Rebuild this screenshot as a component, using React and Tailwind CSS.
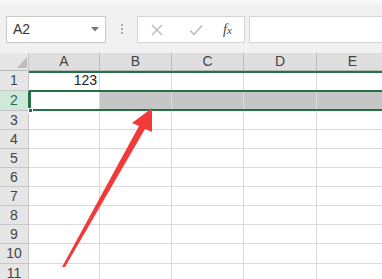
import React from "react";

const cols = [
  { l: "A", w: 71 },
  { l: "B", w: 72 },
  { l: "C", w: 72 },
  { l: "D", w: 73 },
  { l: "E", w: 72 },
];
const rows = [
  { n: 1, h: 20 },
  { n: 2, h: 20 },
  { n: 3, h: 19 },
  { n: 4, h: 19 },
  { n: 5, h: 19 },
  { n: 6, h: 19 },
  { n: 7, h: 19 },
  { n: 8, h: 19 },
  { n: 9, h: 19 },
  { n: 10, h: 20 },
  { n: 11, h: 19 },
];

export default function App() {
  return (
    <div
      className="relative w-[382px] h-[279px] overflow-hidden bg-white text-[#333]"
      style={{ fontFamily: '"Liberation Sans", Arial, sans-serif' }}
    >
      {/* toolbar */}
      <div className="h-[53px] bg-[#f1f1f1] border-t-[4px] border-[#f8f8f8] flex items-start pt-[12px]">
        <div className="ml-[6px] w-[100px] h-[27px] bg-white border border-[#c8c8c8] flex items-center justify-between pl-[6px] pr-[6px]">
          <span className="text-[14px] text-[#333]">A2</span>
          <svg width="8" height="5" viewBox="0 0 8 5">
            <polygon points="0,0 8,0 4,4.5" fill="#777" />
          </svg>
        </div>
        <div className="ml-[15px] mt-[8px] flex flex-col gap-[2px]">
          <div className="w-[2px] h-[2px] bg-[#a8a8a8]" />
          <div className="w-[2px] h-[2px] bg-[#a8a8a8]" />
          <div className="w-[2px] h-[2px] bg-[#a8a8a8]" />
        </div>
        <div className="ml-[14px] w-[108px] h-[27px] bg-white border border-[#d4d4d4] flex items-center">
          <svg className="ml-[13px]" width="12" height="12" viewBox="0 0 12 12">
            <path d="M1 1 L11 11 M11 1 L1 11" stroke="#b8b8b8" strokeWidth="1.3" />
          </svg>
          <svg className="ml-[26px]" width="14" height="12" viewBox="0 0 14 12">
            <path d="M1 6.5 L5 10.5 L13 1.5" stroke="#b8b8b8" strokeWidth="1.4" fill="none" />
          </svg>
          <span
            className="ml-[20px] text-[14px] italic text-[#444]"
            style={{ fontFamily: '"Liberation Serif", "Times New Roman", serif' }}
          >
            f<span className="text-[11px]">x</span>
          </span>
        </div>
        <div className="ml-[4px] flex-1 h-[27px] bg-white border border-[#d4d4d4] border-r-0" />
      </div>

      {/* grid */}
      <div className="relative">
        {/* column headers */}
        <div className="flex h-[18px] border-b border-[#b8b8b8]">
          <div className="w-[29px] shrink-0 bg-[#e6e6e6] border-r border-[#c4c4c4] relative">
            <svg className="absolute left-[17px] top-[4px]" width="10" height="11" viewBox="0 0 10 11">
              <polygon points="10,0 10,11 0,11" fill="#bdbdbd" />
            </svg>
          </div>
          {cols.map((c) => (
            <div
              key={c.l}
              className="shrink-0 bg-[#dedede] border-r border-[#bababa] flex items-center justify-center text-[14px] text-[#444]"
              style={{ width: c.w }}
            >
              {c.l}
            </div>
          ))}
        </div>

        {rows.map((r) => (
          <div key={r.n} className="flex" style={{ height: r.h }}>
            <div
              className={
                "w-[29px] shrink-0 border-r border-b flex items-center justify-center text-[14px] " +
                (r.n === 2
                  ? "bg-[#d0e8d9] text-[#217346] border-r-[#217346] border-b-[#c4c4c4]"
                  : "bg-[#e6e6e6] text-[#444] border-[#c8c8c8]")
              }
            >
              {r.n}
            </div>
            {cols.map((c, i) => (
              <div
                key={c.l}
                className={
                  "shrink-0 border-r border-b border-[#dadada] flex items-center justify-end pr-[2px] text-[14px] text-[#222] " +
                  (r.n === 2 && i > 0 ? "bg-[#c6c6c6]" : "bg-white")
                }
                style={{ width: c.w }}
              >
                {r.n === 1 && i === 0 ? "123" : ""}
              </div>
            ))}
          </div>
        ))}

        {/* selection outline */}
        <div className="absolute left-[29px] right-0 top-[18px] h-[2px] bg-[#217346]" />
        <div className="absolute left-[29px] right-0 top-[37px] h-[2px] bg-[#217346]" />
        <div className="absolute left-[29px] right-0 top-[56px] h-[2px] bg-[#217346]" />
        <div className="absolute left-[29px] w-[2px] top-[37px] h-[21px] bg-[#217346]" />
        <div className="absolute left-[28px] top-[55px] w-[5px] h-[5px] bg-[#217346] border border-white" />
      </div>

      {/* red arrow */}
      <svg className="absolute left-0 top-0" width="382" height="279" viewBox="0 0 382 279">
        <polygon
          points="62,267 139,126 132,123 152,108 152,132 145,129 65,267"
          fill="#f23a3a"
        />
      </svg>
    </div>
  );
}
